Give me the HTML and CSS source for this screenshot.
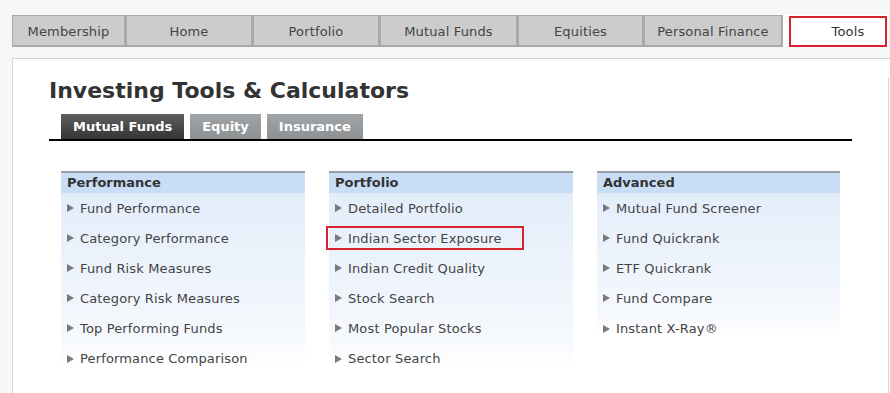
FILE: index.html
```html
<!DOCTYPE html>
<html lang="en">
<head>
    <meta charset="UTF-8">
    <meta name="viewport" content="width=device-width, initial-scale=1.0">
    <title>Investing Tools &amp; Calculators</title>
    <link rel="stylesheet" href="styles.css">
</head>
<body>
    <!-- Menu principal -->
    <nav class="main-nav">
        <a class="nav-tab tab-membership" href="#">Membership</a>
        <a class="nav-tab tab-home" href="#">Home</a>
        <a class="nav-tab tab-portfolio" href="#">Portfolio</a>
        <a class="nav-tab tab-funds" href="#">Mutual Funds</a>
        <a class="nav-tab tab-equities" href="#">Equities</a>
        <a class="nav-tab tab-finance" href="#">Personal Finance</a>
        <div class="nav-current">
            <a class="nav-tools" href="#">Tools</a>
        </div>
    </nav>

    <div class="panel">
        <h1 class="page-title">Investing Tools &amp; Calculators</h1>

        <div class="sub-tabs">
            <a class="sub-tab active" href="#">Mutual Funds</a>
            <a class="sub-tab" href="#">Equity</a>
            <a class="sub-tab" href="#">Insurance</a>
        </div>

        <div class="tool-columns">
            <div class="tool-box">
                <h2 class="box-title">Performance</h2>
                <ul class="box-list">
                    <li><a href="#"><span class="arrow"></span>Fund Performance</a></li>
                    <li><a href="#"><span class="arrow"></span>Category Performance</a></li>
                    <li><a href="#"><span class="arrow"></span>Fund Risk Measures</a></li>
                    <li><a href="#"><span class="arrow"></span>Category Risk Measures</a></li>
                    <li><a href="#"><span class="arrow"></span>Top Performing Funds</a></li>
                    <li><a href="#"><span class="arrow"></span>Performance Comparison</a></li>
                </ul>
            </div>

            <div class="tool-box">
                <h2 class="box-title">Portfolio</h2>
                <ul class="box-list">
                    <li><a href="#"><span class="arrow"></span>Detailed Portfolio</a></li>
                    <li><a class="marked" href="#"><span class="arrow"></span>Indian Sector Exposure</a></li>
                    <li><a href="#"><span class="arrow"></span>Indian Credit Quality</a></li>
                    <li><a href="#"><span class="arrow"></span>Stock Search</a></li>
                    <li><a href="#"><span class="arrow"></span>Most Popular Stocks</a></li>
                    <li><a href="#"><span class="arrow"></span>Sector Search</a></li>
                </ul>
            </div>

            <div class="tool-box">
                <h2 class="box-title">Advanced</h2>
                <ul class="box-list">
                    <li><a href="#"><span class="arrow"></span>Mutual Fund Screener</a></li>
                    <li><a href="#"><span class="arrow"></span>Fund Quickrank</a></li>
                    <li><a href="#"><span class="arrow"></span>ETF Quickrank</a></li>
                    <li><a href="#"><span class="arrow"></span>Fund Compare</a></li>
                    <li><a href="#"><span class="arrow"></span>Instant X-Ray&reg;</a></li>
                </ul>
            </div>
        </div>
    </div>
</body>
</html>
```

FILE: styles.css
```css
body {
    margin: 0;
    background: #f7f7f7;
    font-family: "DejaVu Sans", Verdana, sans-serif;
    font-size: 13px;
    letter-spacing: 0.15px;
    color: #444;
    overflow: hidden;
}

a {
    text-decoration: none;
    color: inherit;
}

/* Menu principal */
.main-nav {
    display: flex;
    margin: 15px 2px 0 12px;
    height: 32px;
}

.nav-tab {
    display: flex;
    justify-content: center;
    align-items: center;
    box-sizing: border-box;
    height: 32px;
    padding-top: 1px;
    background: #cccccc;
    border: 1px solid #a9a9a9;
    border-right-width: 2px;
    border-bottom-width: 2px;
    color: #444;
}

.tab-membership { width: 114px; }
.tab-home { width: 127px; }
.tab-portfolio { width: 127px; }
.tab-funds { width: 138px; }
.tab-equities { width: 126px; }
.tab-finance { width: 139px; }

.nav-current {
    flex: 1;
    background: #fff;
    padding: 1px 1px 0 6px;
}

.nav-tools {
    display: flex;
    justify-content: center;
    align-items: center;
    box-sizing: border-box;
    height: 31px;
    border: 2px solid #d8232f; /* Recuadro rojo */
    padding-left: 20px;
    color: #333;
}

/* Contenido */
.panel {
    position: relative;
    margin: 11px 0 0 12px;
    background: #fff;
    border-top: 1px solid #d4d4d4;
    border-left: 1px solid #d4d4d4;
    padding: 20px 0 0 36px;
    height: 400px;
}

/* Línea vertical a la derecha */
.panel::after {
    content: "";
    position: absolute;
    top: 19px;
    right: 1px;
    bottom: 0;
    border-right: 1px solid #d4d4d4;
}

.page-title {
    margin: 0;
    font-size: 22px;
    letter-spacing: 0;
    line-height: 24px;
    color: #333;
}

.sub-tabs {
    display: flex;
    gap: 6px;
    width: 803px;
    margin-top: 11px;
    padding-left: 12px;
    box-sizing: border-box;
    border-bottom: 2px solid #000;
}

.sub-tab {
    display: block;
    height: 25px;
    line-height: 25px;
    padding: 0 12px;
    font-weight: bold;
    letter-spacing: 0;
    color: #fff;
    background: linear-gradient(#a2a5a8, #8e9194);
}

.sub-tab.active {
    background: linear-gradient(#5e5e5e, #353535);
}

.tool-columns {
    display: grid;
    grid-template-columns: 244px 244px 243px;
    column-gap: 24px;
    margin: 30px 0 0 12px;
}

.tool-box {
    border-top: 2px solid #9a9ea3;
}

.box-title {
    margin: 0;
    height: 20px;
    line-height: 19px;
    padding-left: 6px;
    font-size: 13px;
    letter-spacing: 0;
    color: #333;
    background: #c9ddf6;
}

.box-list {
    list-style: none;
    margin: 0;
    padding: 0 0 0 6px;
    background: linear-gradient(#e3edfa, #f6f9fd 85%, #ffffff);
}

.box-list li {
    height: 30px;
    display: flex;
    align-items: center;
}

.box-list li:last-child {
    height: 24px;
    align-items: flex-start;
    padding-top: 8px;
    box-sizing: border-box;
}

.box-list a {
    display: inline-flex;
    align-items: center;
    color: #444;
}

.arrow {
    width: 0;
    height: 0;
    border-top: 4px solid transparent;
    border-bottom: 4px solid transparent;
    border-left: 7px solid #7a7a7a;
    margin-right: 6px;
}

/* Recuadro rojo de resaltado */
.box-list a.marked {
    height: 24px;
    box-sizing: border-box;
    border: 2px solid #d8232f;
    margin-left: -9px;
    padding: 0 20px 0 7px;
}
```
